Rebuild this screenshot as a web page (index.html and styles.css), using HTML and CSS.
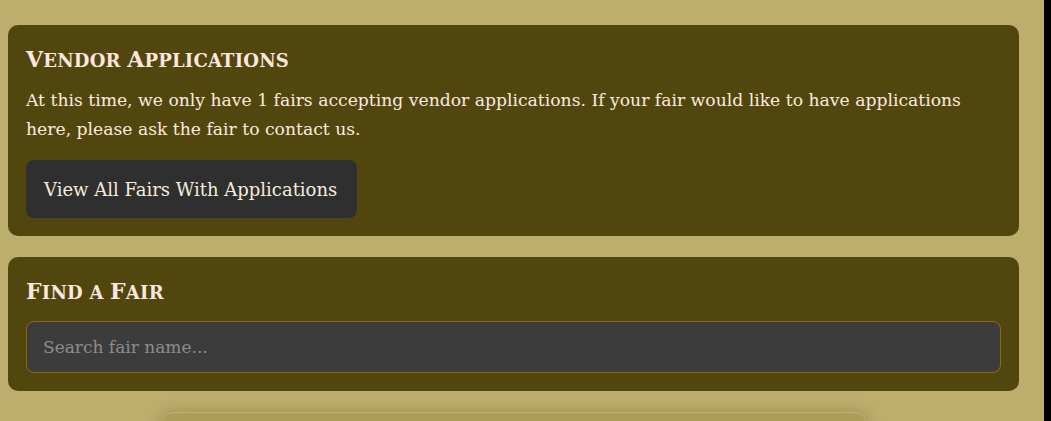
FILE: index.html
```html
<!DOCTYPE html>
<html lang="en">
<head>
<meta charset="utf-8">
<title>Fairs</title>
<link rel="stylesheet" href="styles.css">
</head>
<body>
<div class="page">
  <main class="main">
    <section class="card">
      <h2 class="card-title"><span class="cap">V</span>endor <span class="cap">A</span>pplications</h2>
      <p class="card-text">At this time, we only have 1 fairs accepting vendor applications. If your fair would like to have applications here, please ask the fair to contact us.</p>
      <button class="btn" type="button">View All Fairs With Applications</button>
    </section>
    <section class="card">
      <h2 class="card-title"><span class="cap">F</span>ind a <span class="cap">F</span>air</h2>
      <input class="search" type="text" placeholder="Search fair name...">
    </section>
    <section class="list-card"></section>
  </main>
</div>
</body>
</html>
```
FILE: styles.css
```css
html, body {
  margin: 0;
  padding: 0;
  background: #000;
  overflow: hidden;
}
.page {
  width: 1044px;
  height: 421px;
  background: #bdae6e;
  overflow: hidden;
}
.main {
  width: 1011px;
  padding: 25px 0 0 8px;
  display: flex;
  flex-direction: column;
  gap: 21px;
}
.card {
  background: #51470e;
  border-radius: 10px;
  padding: 18px;
  box-sizing: border-box;
}
.card-title {
  margin: 0 0 9px 0;
  font-family: "DejaVu Serif", serif;
  text-transform: uppercase;
  font-weight: 700;
  font-size: 18px;
  line-height: 32px;
  letter-spacing: 0.2px;
  color: #fde6df;
}
.cap {
  font-size: 22px;
}
.card-text {
  margin: 0 0 16px 0;
  font-family: "DejaVu Serif", serif;
  font-size: 17.2px;
  line-height: 29px;
  color: #fde9df;
}
.btn {
  display: inline-block;
  height: 58px;
  padding: 0 20px 0 18px;
  background: #2f2f2f;
  border: none;
  border-radius: 8px;
  font-family: "DejaVu Serif", serif;
  font-size: 18px;
  color: #f5ecdc;
  cursor: pointer;
}
.search {
  display: block;
  width: 100%;
  box-sizing: border-box;
  height: 52px;
  margin-top: 12px;
  padding: 0 16px;
  background: #3c3c3c;
  border: 1px solid #8d6a12;
  border-radius: 8px;
  font-family: "DejaVu Serif", serif;
  font-size: 17px;
  color: #eee;
  outline: none;
}
.search::placeholder {
  color: #8c8c8c;
}
.list-card {
  align-self: center;
  width: 708px;
  height: 80px;
  box-sizing: border-box;
  background: #ae9d58;
  border: 1px solid #c2b272;
  border-radius: 14px;
  box-shadow: 0 0 14px rgba(90, 80, 30, 0.35);
}
```
